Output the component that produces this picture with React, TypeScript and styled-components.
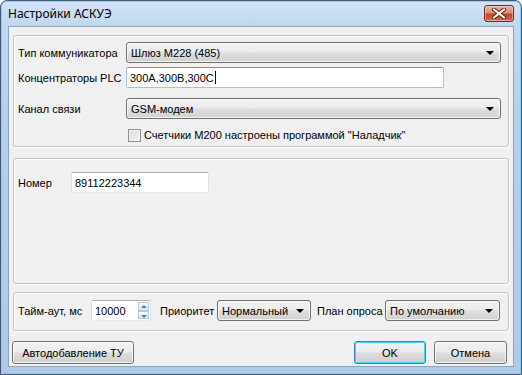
import React from 'react';
import styled, {createGlobalStyle, css} from 'styled-components';

const GlobalStyle = createGlobalStyle`
  html, body {
    margin: 0;
    padding: 0;
    background: #ffffff;
  }
  body {
    font-family: "Liberation Sans", Arial, sans-serif;
    font-size: 11px;
    color: #000;
  }
  * {
    box-sizing: border-box;
  }
`

export default function App() {
  return (
    <>
      <GlobalStyle/>
      <Window>
        <TitleBar>
          <Title>Настройки АСКУЭ</Title>
          <CloseButton>
            <svg width="16" height="11" viewBox="0 0 16 11">
              <path d="M3 1.5 L13 9.5 M13 1.5 L3 9.5" stroke="#5a2418" strokeWidth="4" strokeLinecap="round"/>
              <path d="M3 1.5 L13 9.5 M13 1.5 L3 9.5" stroke="#ffffff" strokeWidth="2.2" strokeLinecap="round"/>
            </svg>
          </CloseButton>
        </TitleBar>

        <Client>
          <Group $height={112} $padTop={6}>
            <Row>
              <Label $w={108}>Тип коммуникатора</Label>
              <Combo $grow>Шлюз М228 (485)</Combo>
            </Row>
            <Row $top={4}>
              <Label $w={108}>Концентраторы PLC</Label>
              <TextBox $w={318} $focused>300A,300B,300C<Caret/></TextBox>
            </Row>
            <Row $top={10}>
              <Label $w={108}>Канал связи</Label>
              <Combo $grow>GSM-модем</Combo>
            </Row>
            <CheckRow>
              <CheckBox/>
              <span>Счетчики М200 настроены программой "Наладчик"</span>
            </CheckRow>
          </Group>

          <Group $grow $padTop={13}>
            <Row>
              <Label $w={53}>Номер</Label>
              <TextBox $w={138}>89112223344</TextBox>
            </Row>
          </Group>

          <Group $height={39} $padTop={7}>
            <Row>
              <Label $w={73}>Тайм-аут, мс</Label>
              <Numeric>
                <span>10000</span>
                <Spinner>
                  <SpinButton $up/>
                  <SpinButton/>
                </Spinner>
              </Numeric>
              <Label $w={57} $left={9}>Приоритет</Label>
              <Combo $w={94}>Нормальный</Combo>
              <Label $w={68} $left={6}>План опроса</Label>
              <Combo $w={115}>По умолчанию</Combo>
            </Row>
          </Group>

          <ButtonRow>
            <Button $w={122}>Автодобавление ТУ</Button>
            <ButtonGroup>
              <Button $w={72} $default>OK</Button>
              <Button $w={73}>Отмена</Button>
            </ButtonGroup>
          </ButtonRow>
        </Client>
      </Window>
    </>
  );
}

const Window = styled.div`
  width: 522px;
  height: 375px;
  display: flex;
  flex-direction: column;
  padding: 0 7px 7px 7px;
  border: 1px solid #3d5a78;
  border-radius: 7px 7px 0 0;
  background: linear-gradient(to bottom, #d3e3f4 0px, #c2d8ef 24px, #b7cfe9 120px, #b0cae6 100%);
  box-shadow: inset 0 0 0 1px rgba(120, 210, 245, 0.9);
`

const TitleBar = styled.div`
  height: 25px;
  flex-shrink: 0;
  display: flex;
  justify-content: space-between;
  align-items: flex-start;
`

const Title = styled.span`
  margin-top: 5px;
  font-family: "Noto Sans", "Open Sans", sans-serif;
  font-size: 12px;
  line-height: 16px;
  color: #000;
`

const CloseButton = styled.div`
  margin-top: 4px;
  width: 30px;
  height: 17px;
  display: flex;
  align-items: center;
  justify-content: center;
  border: 1px solid #6b2a1e;
  border-radius: 3px;
  background: linear-gradient(to bottom, #eab3a4 0%, #dc8a75 45%, #c6432a 55%, #d0674c 100%);
  box-shadow: inset 0 0 0 1px rgba(255, 220, 210, 0.55);
`

const Client = styled.div`
  flex: 1;
  display: flex;
  flex-direction: column;
  padding: 8px 4px 2px 4px;
  gap: 0;
  border: 1px solid #8ba4be;
  background: #f0f0f0;
`

const Group = styled.div<{$height?: number; $grow?: boolean; $padTop?: number}>`
  flex-shrink: 0;
  ${p => p.$grow ? css`flex: 1;` : css`height: ${p.$height}px;`}
  display: flex;
  flex-direction: column;
  padding: ${p => p.$padTop ?? 0}px 7px 0 4px;
  border: 1px solid #bcc5cc;
  border-radius: 3px;
  box-shadow: inset 1px 1px 0 #ffffff, 1px 1px 0 #ffffff;
  & + & {
    margin-top: 11px;
  }
  &:nth-child(3) {
    margin-top: 8px;
  }
`

const Row = styled.div<{$top?: number}>`
  display: flex;
  align-items: center;
  height: 21px;
  margin-top: ${p => p.$top ?? 0}px;
`

const Label = styled.span<{$w?: number; $left?: number}>`
  flex-shrink: 0;
  width: ${p => p.$w}px;
  margin-left: ${p => p.$left ?? 0}px;
  white-space: nowrap;
`

const Combo = styled.div<{$w?: number; $grow?: boolean}>`
  position: relative;
  height: 21px;
  ${p => p.$grow ? css`flex: 1;` : css`width: ${p.$w}px; flex-shrink: 0;`}
  display: flex;
  align-items: center;
  padding-left: 4px;
  border: 1px solid #707070;
  border-radius: 3px;
  background: linear-gradient(to bottom, #f3f3f3 0%, #ebebeb 48%, #dedede 52%, #d2d2d2 100%);
  box-shadow: inset 0 0 0 1px rgba(255, 255, 255, 0.7);
  white-space: nowrap;

  &::after {
    content: "";
    position: absolute;
    right: 6px;
    top: 8px;
    border-left: 4px solid transparent;
    border-right: 4px solid transparent;
    border-top: 4px solid #000;
  }
`

const TextBox = styled.div<{$w: number; $focused?: boolean}>`
  width: ${p => p.$w}px;
  height: 21px;
  flex-shrink: 0;
  display: flex;
  align-items: center;
  padding-left: 3px;
  background: #fff;
  border: 1px solid;
  border-radius: 2px;
  border-color: ${p => p.$focused
    ? '#5d9bd6 #99c6ee #99c6ee #99c6ee'
    : '#abadb3 #e2e3ea #e3e9ef #dbdfe6'};
`

const Caret = styled.span`
  display: inline-block;
  width: 1px;
  height: 13px;
  margin-left: 1px;
  background: #000;
`

const CheckRow = styled.div`
  display: flex;
  align-items: center;
  gap: 3px;
  height: 14px;
  margin-top: 9px;
  margin-left: 110px;
`

const CheckBox = styled.span`
  width: 13px;
  height: 13px;
  border: 1px solid #8f8f8f;
  background: linear-gradient(135deg, #dcdcdc 0%, #f4f4f4 100%);
  box-shadow: inset 0 0 0 1px #f4f4f4;
`

const Numeric = styled.div`
  width: 60px;
  height: 21px;
  flex-shrink: 0;
  display: flex;
  align-items: center;
  justify-content: space-between;
  padding: 1px 1px 1px 3px;
  background: #fff;
  border: 1px solid;
  border-color: #abadb3 #e2e3ea #e3e9ef #dbdfe6;
  border-radius: 2px;
`

const Spinner = styled.div`
  display: flex;
  flex-direction: column;
  height: 17px;
  width: 11px;
`

const SpinButton = styled.span<{$up?: boolean}>`
  position: relative;
  flex: 1;
  border: 1px solid #b4c8dc;
  background: linear-gradient(to bottom, #f6f9fc, #dfe8f1);

  &::after {
    content: "";
    position: absolute;
    left: 2px;
    top: ${p => p.$up ? 2 : 3}px;
    border-left: 3px solid transparent;
    border-right: 3px solid transparent;
    ${p => p.$up
      ? css`border-bottom: 3px solid #4d7aa8;`
      : css`border-top: 3px solid #4d7aa8;`}
  }
`

const ButtonRow = styled.div`
  display: flex;
  justify-content: space-between;
  margin-top: 10px;
  padding: 0 2px 0 0;
  margin-left: -1px;
`

const ButtonGroup = styled.div`
  display: flex;
  gap: 8px;
`

const Button = styled.div<{$w: number; $default?: boolean}>`
  width: ${p => p.$w}px;
  height: 23px;
  display: flex;
  align-items: center;
  justify-content: center;
  border: 1px solid ${p => p.$default ? '#3c7fb1' : '#707070'};
  border-radius: 3px;
  background: linear-gradient(to bottom, #f2f2f2 0%, #ebebeb 48%, #dddddd 52%, #cfcfcf 100%);
  box-shadow: inset 0 0 0 1px ${p => p.$default ? '#48d8fb' : 'rgba(255, 255, 255, 0.75)'};
  white-space: nowrap;
`
